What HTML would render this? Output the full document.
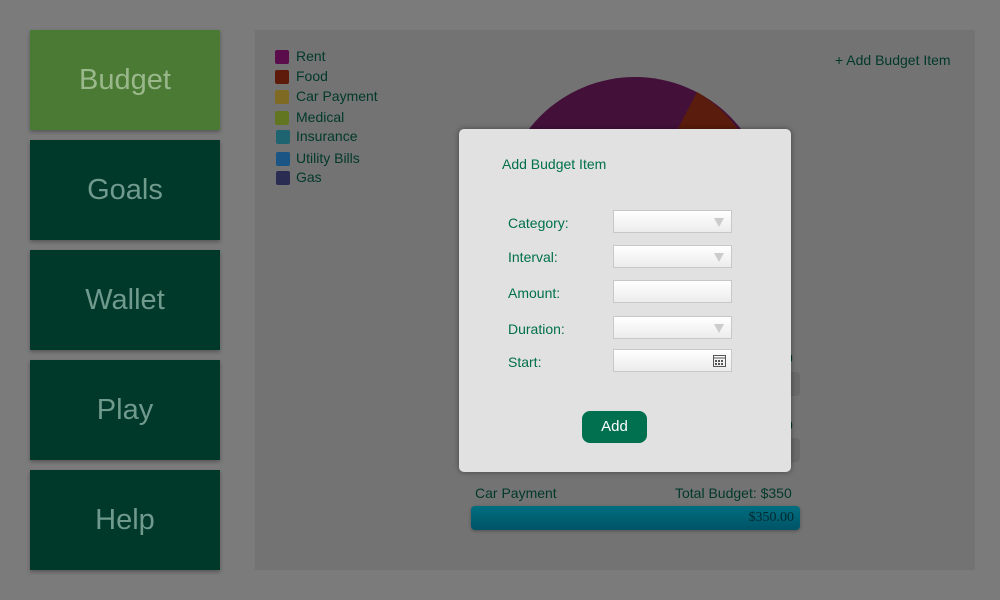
<!DOCTYPE html>
<html style="background:#7b7b7b"><head><style>
html,body{margin:0;padding:0}
body{width:1000px;height:600px;background:#7b7b7b;font-family:"Liberation Sans",sans-serif;position:relative;overflow:hidden}
.nav{position:absolute;left:30px;width:190px;height:100px;background:#00382a;color:#6f9a8c;font-size:29px;display:flex;align-items:center;justify-content:center;box-shadow:0 2px 4px rgba(0,0,0,.3)}
.panel{position:absolute;left:255px;top:30px;width:720px;height:540px;background:#737373}
.lg{position:absolute;left:275px;font-size:14px;color:#00382a}
.lg i{position:absolute;left:0;top:2px;width:14px;height:14px;border-radius:2px}
.lg span{position:absolute;left:21px;white-space:nowrap}
.modal{position:absolute;left:459px;top:129px;width:332px;height:343px;background:#e1e1e1;border-radius:5px;box-shadow:0 0 6px rgba(0,0,0,.4)}
.lab{position:absolute;left:49px;font-size:14px;color:#00704a}
.inp{position:absolute;left:154px;width:117px;height:21px;border:1px solid #c8c8c8;background:linear-gradient(#fff,#ececec)}
.arr{position:absolute;right:7px;top:7px;width:0;height:0;border-left:5px solid transparent;border-right:5px solid transparent;border-top:9px solid #ccc}
</style></head><body>
<div class="nav" style="top:30px;background:#4a7a33;color:#9ab88b">Budget</div>
<div class="nav" style="top:140px">Goals</div>
<div class="nav" style="top:250px">Wallet</div>
<div class="nav" style="top:360px">Play</div>
<div class="nav" style="top:470px">Help</div>
<div class="panel"></div>
<div class="lg" style="top:48px"><i style="background:#5a0d4a"></i><span>Rent</span></div>
<div class="lg" style="top:68px"><i style="background:#5e1a0a"></i><span>Food</span></div>
<div class="lg" style="top:88px"><i style="background:#7e6a22"></i><span>Car Payment</span></div>
<div class="lg" style="top:109px"><i style="background:#627622"></i><span>Medical</span></div>
<div class="lg" style="top:128px"><i style="background:#1e6470;left:1px"></i><span>Insurance</span></div>
<div class="lg" style="top:150px"><i style="background:#1a5585;left:1px"></i><span>Utility Bills</span></div>
<div class="lg" style="top:169px"><i style="background:#2a2c52;left:1px"></i><span>Gas</span></div>
<div style="position:absolute;left:835px;top:52px;font-size:14px;color:#00382a">+ Add Budget Item</div>
<svg style="position:absolute;left:500px;top:76px" width="270" height="270"><circle cx="135" cy="135" r="134" fill="#43103a"/><path d="M135 135 L197 16 A134 134 0 0 1 240 56 Z" fill="#5a1c0c"/></svg>
<div style="position:absolute;left:785px;top:350px;font-size:14px;color:#00382a">0</div>
<div style="position:absolute;left:780px;top:372px;width:20px;height:24px;background:#6a6a6a;border-radius:4px"></div>
<div style="position:absolute;left:785px;top:417px;font-size:14px;color:#00382a">0</div>
<div style="position:absolute;left:780px;top:438px;width:20px;height:24px;background:#6a6a6a;border-radius:4px"></div>
<div style="position:absolute;left:475px;top:485px;font-size:14px;color:#00382a">Car Payment</div>
<div style="position:absolute;left:675px;top:485px;font-size:14px;color:#00382a">Total Budget: $350</div>
<div style="position:absolute;left:471px;top:506px;width:329px;height:24px;border-radius:4px;background:linear-gradient(#006e80,#005366);box-shadow:0 1px 3px rgba(0,0,0,.3)"><span style="position:absolute;right:6px;top:4px;font-family:'Liberation Serif',serif;font-size:14px;color:#002a30">$350.00</span></div>
<div class="modal">
<div style="position:absolute;left:43px;top:27px;font-size:14px;color:#00704a">Add Budget Item</div>
<div class="lab" style="top:86px">Category:</div><div class="inp" style="top:81px"><div class="arr"></div></div>
<div class="lab" style="top:120px">Interval:</div><div class="inp" style="top:116px"><div class="arr"></div></div>
<div class="lab" style="top:156px">Amount:</div><div class="inp" style="top:151px"></div>
<div class="lab" style="top:192px">Duration:</div><div class="inp" style="top:187px"><div class="arr"></div></div>
<div class="lab" style="top:225px">Start:</div><div class="inp" style="top:220px"><svg style="position:absolute;right:5px;top:4px" width="13" height="13"><rect x="0.5" y="1.5" width="12" height="11" fill="none" stroke="#555"/><line x1="0" y1="4" x2="13" y2="4" stroke="#555"/><g fill="#555"><rect x="2" y="6" width="2" height="2"/><rect x="5" y="6" width="2" height="2"/><rect x="8" y="6" width="2" height="2"/><rect x="2" y="9" width="2" height="2"/><rect x="5" y="9" width="2" height="2"/><rect x="8" y="9" width="2" height="2"/></g></svg></div>
<div style="position:absolute;left:123px;top:282px;width:65px;height:32px;border-radius:8px;background:#00704f;color:#fff;font-size:15px;text-align:center;line-height:32px">Add</div>
</div>
</body></html>
